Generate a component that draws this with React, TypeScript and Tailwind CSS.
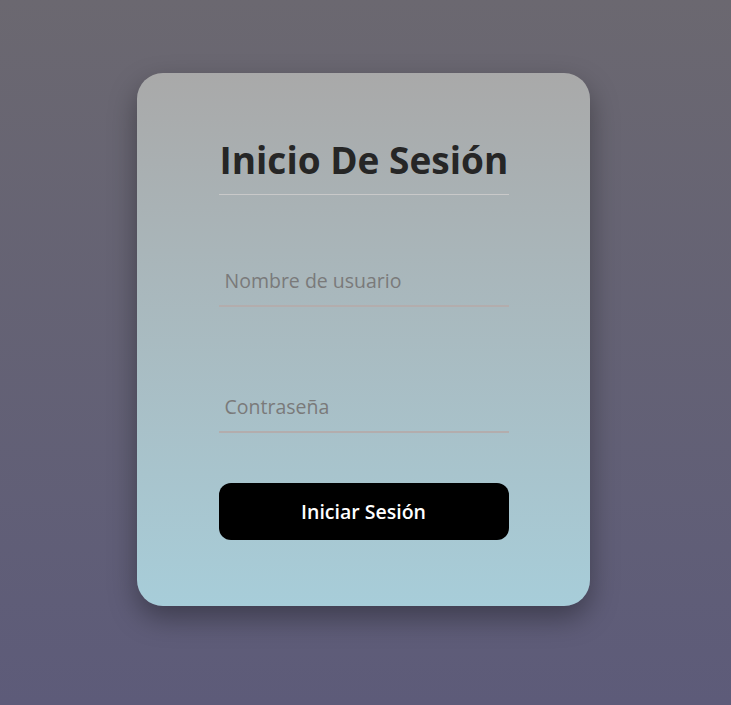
export default function App() {
    return (
        <div
            className="min-h-[705px] w-full bg-gradient-to-b from-[#6b6870] to-[#5d5b79] flex justify-center pt-[73px] pr-[4px]"
            style={{ fontFamily: '"Open Sans", "Noto Sans", sans-serif' }}
        >
            {/* Login card */}
            <div className="w-[453px] h-[533px] rounded-[26px] bg-gradient-to-b from-[#a9a9a9] to-[#a7cdd9] shadow-[0_12px_28px_rgba(0,0,0,0.35)] flex flex-col items-center">
                <div className="w-[290px] flex flex-col">
                    <h1 className="mt-[63px] pl-[1px] text-[37px] leading-[48px] font-bold text-[#262626] text-left pb-[10px] border-b border-[#c9c9c9]">
                        Inicio De Sesión
                    </h1>

                    <input
                        type="text"
                        placeholder="Nombre de usuario"
                        className="mt-[65px] h-[47px] w-full bg-transparent px-[6px] pb-[5px] text-[19.5px] text-[#333] placeholder:text-[#7a7a7a] outline-none border-b-2 border-[#b3adad]"
                    />

                    <input
                        type="password"
                        placeholder="Contraseña"
                        className="mt-[79px] h-[47px] w-full bg-transparent px-[6px] pb-[5px] text-[19.5px] text-[#333] placeholder:text-[#7a7a7a] outline-none border-b-2 border-[#b3adad]"
                    />

                    <button className="mt-[50px] h-[57px] w-full rounded-[12px] bg-black text-white text-[19.5px] font-semibold">
                        Iniciar Sesión
                    </button>
                </div>
            </div>
        </div>
    );
}
